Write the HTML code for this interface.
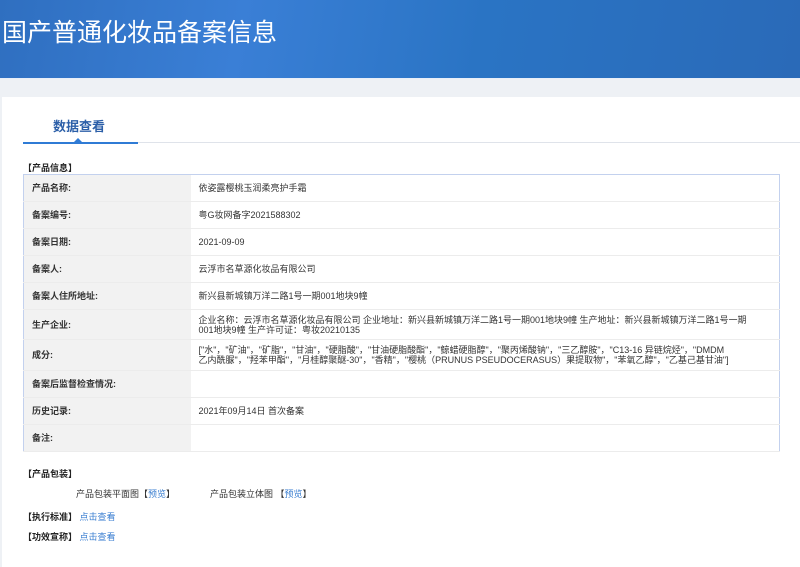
<!DOCTYPE html>
<html><head><meta charset="utf-8"><style>
*{margin:0;padding:0;box-sizing:border-box}
body{width:800px;height:567px;overflow:hidden;background:#eef1f5;font-family:"Liberation Sans","Noto Sans CJK SC",sans-serif;font-size:9px;color:#333}
.hd{position:absolute;left:0;top:0;width:800px;height:79px;background:linear-gradient(100deg,#2f6fc0 0%,#3a7fd6 30%,#2a74c4 60%,#2a6ab8 100%);border-bottom:1px solid #e8eef8}
.hd h1{position:absolute;left:2px;top:13px;font-size:25px;font-weight:normal;color:#fff;font-family:"Noto Sans CJK SC",sans-serif}
.pn{position:absolute;left:2px;top:97px;width:798px;height:470px;background:#fff}
.tab{position:absolute;left:53px;top:116px;font-size:13px;font-weight:bold;color:#2c5fa8}
.ln{position:absolute;left:23px;top:142px;width:777px;height:1px;background:#dfe3ea}
.lnb{position:absolute;left:23px;top:142px;width:115px;height:2px;background:#2f7bd5}
.tri{position:absolute;left:74px;top:138px;width:0;height:0;border-left:4px solid transparent;border-right:4px solid transparent;border-bottom:4px solid #2f7bd5}
.sec{position:absolute;font-weight:bold;color:#222;font-size:9px}
table{position:absolute;left:23px;top:174px;width:757px;border-collapse:collapse;border:1px solid #c3d1ee}
td{border-bottom:1px solid #ececec;vertical-align:middle;line-height:10px}
td.l{width:167px;background:#f2f2f2;font-weight:bold;padding-left:8px}
td.v{padding-left:8px;padding-right:30px}
a{color:#3a7ed0;text-decoration:none}
.t{position:absolute;font-size:9px}
</style></head><body>
<div class="hd"><h1>国产普通化妆品备案信息</h1></div>
<div class="pn"></div>
<div class="tab">数据查看</div>
<div class="ln"></div><div class="lnb"></div><div class="tri"></div>
<div class="sec" style="left:23px;top:161px">【产品信息】</div>
<table>
<tr style="height:27px"><td class="l">产品名称:</td><td class="v">依姿露樱桃玉润柔亮护手霜</td></tr>
<tr style="height:27px"><td class="l">备案编号:</td><td class="v">粤G妆网备字2021588302</td></tr>
<tr style="height:27px"><td class="l">备案日期:</td><td class="v">2021-09-09</td></tr>
<tr style="height:27px"><td class="l">备案人:</td><td class="v">云浮市名草源化妆品有限公司</td></tr>
<tr style="height:27px"><td class="l">备案人住所地址:</td><td class="v">新兴县新城镇万洋二路1号一期001地块9幢</td></tr>
<tr style="height:30px"><td class="l">生产企业:</td><td class="v">企业名称：云浮市名草源化妆品有限公司 企业地址：新兴县新城镇万洋二路1号一期001地块9幢 生产地址：新兴县新城镇万洋二路1号一期001地块9幢 生产许可证：粤妆20210135</td></tr>
<tr style="height:31px"><td class="l">成分:</td><td class="v">["水"，"矿油"，"矿脂"，"甘油"，"硬脂酸"，"甘油硬脂酸酯"，"鲸蜡硬脂醇"，"聚丙烯酸钠"，"三乙醇胺"，"C13-16 异链烷烃"，"DMDM<br>乙内酰脲"，"羟苯甲酯"，"月桂醇聚醚-30"，"香精"，"樱桃（PRUNUS PSEUDOCERASUS）果提取物"，"苯氧乙醇"，"乙基己基甘油"]</td></tr>
<tr style="height:27px"><td class="l">备案后监督检查情况:</td><td class="v"></td></tr>
<tr style="height:27px"><td class="l">历史记录:</td><td class="v">2021年09月14日 首次备案</td></tr>
<tr style="height:27px"><td class="l">备注:</td><td class="v"></td></tr>
</table>
<div class="sec" style="left:23px;top:467px">【产品包装】</div>
<div class="t" style="left:76px;top:487px">产品包装平面图【<a>预览</a>】</div>
<div class="t" style="left:210px;top:487px">产品包装立体图 【<a>预览</a>】</div>
<div class="sec" style="left:23px;top:510px">【执行标准】 <a style="font-weight:normal">点击查看</a></div>
<div class="sec" style="left:23px;top:530px">【功效宣称】 <a style="font-weight:normal">点击查看</a></div>
</body></html>
